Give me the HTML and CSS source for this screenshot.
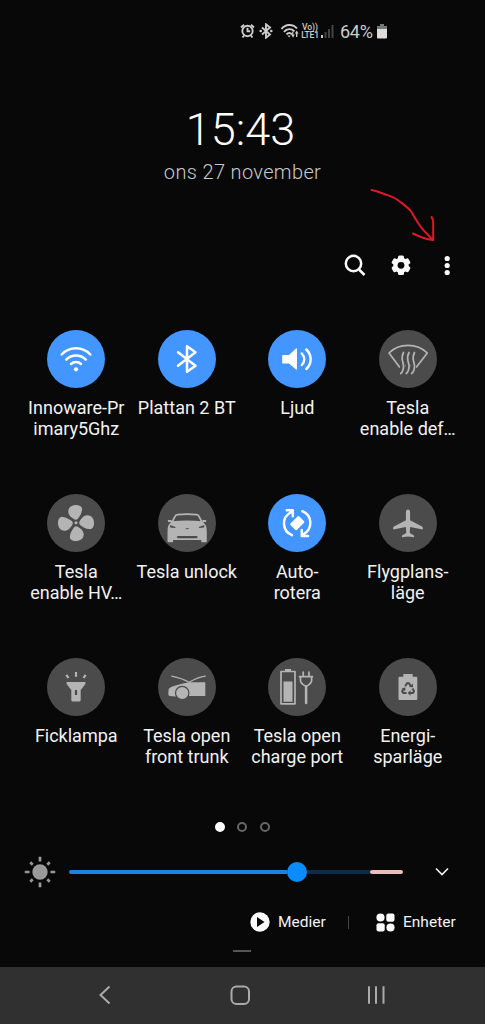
FILE: index.html
```
<!DOCTYPE html>
<html lang="sv">
<head>
<meta charset="utf-8">
<title>Snabbpanel</title>
<link rel="stylesheet" href="styles.css">
</head>
<body>
<div class="phone">
  <header class="status">
    <svg class="status-alarm" width="15" height="16" viewBox="0 0 15 16"><circle cx="7.500" cy="8" r="5.200" class="st-line"/><path class="st-line" d="M7.500 4.800v3.500h2.700M1 4.500L4 1.800M14 4.500L11 1.800M2.500 14.500l2-2.500M12.500 14.500l-2-2.500"/></svg>
    <svg class="status-bt" width="14" height="16" viewBox="0 0 14 16"><path class="st-line" d="M3 4.500l8 7-4 3.200V1.300l4 3.200-8 7"/><circle cx="1.700" cy="8" r="1.300" fill="#ccc"/><circle cx="12.300" cy="8" r="1.300" fill="#ccc"/></svg>
    <svg class="status-wifi" width="20" height="16" viewBox="0 0 20 16"><path class="st-line" d="M1.500 6C5.500 .8 13 .8 17 5.500M4 8.800c2.800-3.500 7.500-3.500 10.500-.5M6.500 11.300c1.500-1.800 4-1.800 5.500 0"/><path fill="#ccc" d="M7.500 12.500h3.200L9.200 14.500zM11.200 11.500h1v-3h1.200v3h1.300l-1.700 3.200zM14.800 10.500l1.900-3 1.900 3h-1.200v3.500h-1.400v-3.500z"/></svg>
    <div class="volte"><span>Vo))</span><span class="lte">LTE1</span></div>
    <svg class="status-signal" width="14" height="14" viewBox="0 0 14 14"><path fill="#ccc" d="M0 11h2v3H0z"/><path fill="#444" d="M3.500 8h2v6h-2zM7 5h2v9H7zM10.500 1h2v13h-2z"/></svg>
    <span class="percent">64%</span>
    <svg class="status-battery" width="10" height="15" viewBox="0 0 10 15"><path fill="#777" d="M3 0h4v2H3zM0 2h10v4H0z"/><path fill="#ddd" d="M0 5h10v8.500a1 1 0 0 1-1 1H1a1 1 0 0 1-1-1z"/></svg>
  </header>

  <section class="clock">
    <div class="time">15:43</div>
    <div class="date">ons 27 november</div>
  </section>

  <nav class="actions">
    <svg width="46" height="30" viewBox="0 0 46 30"><circle cx="21.500" cy="13.500" r="7.700" class="search-line"/><path class="search-line" d="M27 19.500l5.500 5.500"/></svg>
    <svg width="46" height="30" viewBox="0 0 46 30"><g fill="#fafafa"><circle cx="23" cy="15.300" r="7.700"/><g id="teeth"><rect x="20" y="5.600" width="6" height="19.400" rx="1.500"/></g><use href="#teeth" transform="rotate(60 23 15.300)"/><use href="#teeth" transform="rotate(120 23 15.300)"/></g><circle cx="23" cy="15.300" r="3.400" fill="#080808"/></svg>
    <svg width="46" height="30" viewBox="0 0 46 30"><g fill="#fafafa"><circle cx="23.200" cy="8.500" r="2.600"/><circle cx="23.200" cy="15.500" r="2.600"/><circle cx="23.200" cy="22.500" r="2.600"/></g></svg>
  </nav>

  <main class="tiles">
    <div class="tile">
      <svg class="disc on" viewBox="0 0 58 58"><g class="line"><path d="M14.700 24.500C22.500 16.300 35.500 16.300 43.300 24.500M19.300 29.500c5.500-5.500 13.900-5.500 19.400 0M24 34c2.800-2.600 7.200-2.600 10 0"/></g><circle class="fill" cx="29" cy="39.300" r="2.100"/></svg>
      <div class="label">Innoware-Pr<br>imary5Ghz</div>
    </div>
    <div class="tile">
      <svg class="disc on" viewBox="0 0 58 58"><path class="line" d="M20 22.300L37.500 35.700 29 41.700V16.300l8.500 6L20 35.700"/></svg>
      <div class="label">Plattan 2 BT</div>
    </div>
    <div class="tile">
      <svg class="disc on" viewBox="0 0 58 58"><path class="fill" d="M15 25h6l7-6.500q1-.8 1 .5v20q0 1.300-1 .5L21 33.500h-6q-.8 0-.8-.8v-7q0-.7.800-.7z"/><path class="line" d="M33.800 23.500c3.200 3.500 3.200 8 0 11.500M38.300 19.500c5.800 5.500 5.800 14 0 19.500"/></svg>
      <div class="label">Ljud</div>
    </div>
    <div class="tile">
      <svg class="disc" viewBox="0 0 58 58"><path class="line thin" d="M10 23C20 12.800 38 12.800 48.300 23L37.500 37q-8.500-3.500-17 0z"/><path class="line gap" d="M23.500 25v15M29 25v15M34.500 25v15"/><path class="line thin" d="M24.500 22.500q-2.200 4-1 8.500 1.800 5 .5 9-.7 2.300-2.300 3.500M30 22.500q-2.200 4-1 8.500 1.800 5 .5 9-.7 2.300-2.300 3.500M35.500 22.500q-2.200 4-1 8.500 1.800 5 .5 9-.7 2.300-2.300 3.500"/></svg>
      <div class="label">Tesla<br>enable def…</div>
    </div>

    <div class="tile">
      <svg class="disc" viewBox="0 0 58 58"><circle class="fill" cx="29" cy="28.700" r="1.500"/><g class="fill"><path id="blade" d="M27.300 25.300C24 23.500 21.300 21 21.300 17.500c0-4.500 4-6.700 8.500-6.500 3.500.2 5.700 2 5.300 4.800-.4 3.500-2.300 6.500-4.200 9-1.300 1.300-2.300 1.300-3.600.5z"/><use href="#blade" transform="rotate(90 29 29)"/><use href="#blade" transform="rotate(180 29 29)"/><use href="#blade" transform="rotate(270 29 29)"/></g></svg>
      <div class="label">Tesla<br>enable HV…</div>
    </div>
    <div class="tile">
      <svg class="disc" viewBox="0 0 58 58"><path class="line thin" d="M14 28l3.500-6.300q.5-1 2-1.100 9.500-.8 19 0 1.500.1 2 1.100L44 28"/><path class="fill" d="M13.500 27.300q15.500-1.500 31 0l3.300 4q1.200 2.500 1 7v9.300q0 .7-.8.700h-4q-.8 0-.8-.7V46H15.100v1.600q0 .7-.8.700h-4q-.8 0-.8-.7v-9.300q-.2-4.500 1-7zM9.800 26h3.700v2H10zM44.500 26h3.700l-.2 2h-3.500z"/><path fill="#4b4b4b" d="M12 31l5.500 2-.3 1-5-.6zM46.300 31l-5.500 2 .3 1 5-.6zM27 34.300h4.500l-2.200 1.200zM20 41.900h18.500l1.500 1.200-1.500 1.200H20l-1.500-1.200z"/></svg>
      <div class="label">Tesla unlock</div>
    </div>
    <div class="tile">
      <svg class="disc on" viewBox="0 0 58 58"><path class="line" d="M24 41.200C14 37 12.800 23.500 23.300 18M18.800 16.300h6v6M34.300 17.200c10 4.200 11 17.300 1 23.300M40 42h-6.200v-6"/><rect class="fill" x="24.800" y="23" width="9" height="12.300" rx="1" transform="rotate(45 29.300 29.100)"/></svg>
      <div class="label">Auto-<br>rotera</div>
    </div>
    <div class="tile">
      <svg class="disc" viewBox="0 0 58 58"><path class="fill" d="M26.900 18.500q0-3 2.100-3t2.100 3v7.800L43 32.500q.8.500.8 1.300v1.700L31.100 33l-.4 6 4 2.300q.4.300.4 1v1L29 42.500l-6.100.8v-1q0-.7.400-1l4-2.300-.4-6-12.700 2.500v-1.700q0-.8.800-1.300l11.900-6.200z"/></svg>
      <div class="label">Flygplans-<br>läge</div>
    </div>

    <div class="tile">
      <svg class="disc" viewBox="0 0 58 58"><path class="fill" fill-rule="evenodd" d="M19.500 24h19q.2 1.500-.3 2.200L33.700 32v10q0 1.500-1.500 1.500h-6.400q-1.500 0-1.500-1.500V32l-4.500-5.800q-.5-.7-.3-2.200zM27.900 32v5h2.200v-5z"/><path class="ray" d="M29 14v4.700M19.300 16.800l2.200 3.200M38.700 16.800L36.500 20"/></svg>
      <div class="label">Ficklampa</div>
    </div>
    <div class="tile">
      <svg class="disc" viewBox="0 0 58 58"><path class="line hair" d="M13.700 18.200C20 19.500 27 22 31 24.300 36 21.500 42 19 47.300 18.200"/><path class="fill" d="M31 24.300h16.300V38H30.500l-13 .5-6-.5q-1.500-.5-1.200-3l.4-4q1-1.700 6-3.300Q24 25.500 31 24.300z"/><circle cx="24.200" cy="35" r="6.700" fill="#b4b4b4" stroke="#4b4b4b" stroke-width="1.200"/></svg>
      <div class="label">Tesla open<br>front trunk</div>
    </div>
    <div class="tile">
      <svg class="disc" viewBox="0 0 58 58"><path class="line thin" d="M13 13.500h14v32.300H13z"/><path class="fill" d="M17 11h6v2.500h-6zM15.500 23.500h9v20.300h-9z"/><path class="line thin" d="M35.200 14v4M41 14v4M31.500 18.700h13M32.500 19v3.500q0 3 5.600 6 5.500-3 5.500-6V19"/><path class="line" d="M38.100 28.500V45"/></svg>
      <div class="label">Tesla open<br>charge port</div>
    </div>
    <div class="tile">
      <svg class="disc" viewBox="0 0 58 58"><path class="fill" d="M24.300 16h9.400v2.700h3.600q1 0 1 1V41q0 1-1 1H20.500q-1 0-1-1V19.700q0-1 1-1h3.800z"/><g fill="none" stroke="#4b4b4b" stroke-width="2"><path d="M26.200 28.300l1.800-3h2l2 3.300M33.500 30.500l1.500 2.700-1 1.800h-3M27.500 35h-3.300l-1-1.800 1.700-2.700"/></g><path fill="#4b4b4b" d="M30 29l4 .3v-3.800zM31.500 32.300v5.500l-2.800-2.800zM22.300 31l4-1.700v3.700z"/></svg>
      <div class="label">Energi-<br>sparläge</div>
    </div>
  </main>

  <div class="pages"><i class="page current"></i><i class="page"></i><i class="page"></i></div>

  <section class="brightness">
    <svg class="sun" viewBox="0 0 32 32"><circle cx="16" cy="16" r="7.700" fill="#999"/><path stroke="#999" stroke-width="2.700" d="M16 .8v4.700M16 26.500v4.700M.8 16h4.700M26.500 16h4.700M6.300 6.300l2.400 2.400M23.300 23.300l2.400 2.400M6.300 25.700l2.400-2.400M23.300 8.700l2.400-2.400"/></svg>
    <div class="track"><span class="filled"></span><span class="knob"></span><span class="rest"></span><span class="limit"></span></div>
    <svg class="chevron" width="14" height="10" viewBox="0 0 14 10"><path d="M1 1.500l6 6 6-6" fill="none" stroke="#eee" stroke-width="1.700"/></svg>
  </section>

  <section class="shortcuts">
    <svg class="play" width="20" height="20" viewBox="0 0 20 20"><circle cx="10" cy="10" r="9.700" fill="#fafafa"/><path fill="#080808" d="M7 5v10l7.500-5z"/></svg>
    <span>Medier</span>
    <i class="divider"></i>
    <svg class="devices" width="19" height="19" viewBox="0 0 19 19"><g fill="#fafafa"><circle cx="4.500" cy="4.500" r="4.100"/><rect x="10.300" y=".5" width="8.200" height="8.200" rx="2"/><rect x=".5" y="10.300" width="8.200" height="8.200" rx="2"/><circle cx="14.500" cy="14.500" r="4.100"/></g></svg>
    <span>Enheter</span>
  </section>

  <div class="handle"></div>

  <footer class="navbar">
    <svg width="136" height="24" viewBox="0 0 136 24"><path class="nav-line" d="M73.500 3.500l-9 8.500 9 8.500"/></svg>
    <svg width="136" height="24" viewBox="0 0 136 24"><rect class="nav-line" x="59.500" y="3.500" width="17.500" height="17.500" rx="5"/></svg>
    <svg width="136" height="24" viewBox="0 0 136 24"><path class="nav-line" d="M61 3.200v17.600M68 3.200v17.600M75.500 3.200v17.600"/></svg>
  </footer>

  <svg class="annotation" width="70" height="58" viewBox="368 186 70 58"><path d="M371.500 190c6 1 10 3 14 4.500 5 1.800 9 3 12.500 5.700 5 4 9.500 6.500 13.500 11.800 3 5 5 9 9 14.500 3 4.500 8 8 12 13.500M431.500 217q1.700 2 1.700 6v17M413 233.500q5 2.500 10 4.200 5 1.800 10 2.300"/></svg>
</div>
</body>
</html>
```
FILE: styles.css
```
* { box-sizing: border-box; }
body {
  margin: 0;
  background: #080808;
  color: #f2f2f2;
  font-family: Roboto, "Liberation Sans", sans-serif;
}
.phone {
  position: relative;
  display: flex;
  flex-direction: column;
  width: 485px;
  height: 1024px;
  overflow: hidden;
}
svg { display: block; flex: none; }

.status {
  display: flex;
  align-items: center;
  height: 62px;
  padding-left: 240px;
  color: #ccc;
}
.st-line { fill: none; stroke: #ccc; stroke-width: 1.9; }
.status-bt { margin-left: 4px; }
.status-wifi { margin-left: 7px; }
.volte {
  display: flex;
  flex-direction: column;
  align-items: center;
  width: 20px;
  font-size: 8.5px;
  font-weight: 500;
  line-height: 8px;
}
.lte { letter-spacing: -0.2px; }
.status-signal { margin-left: 1px; }
.percent { width: 34px; margin-left: 5px; font-size: 18px; letter-spacing: -0.3px; white-space: nowrap; }
.status-battery { margin-left: 3px; }

.clock {
  height: 183px;
  padding-top: 41px;
  text-align: center;
  font-weight: 300;
}
.time { font-size: 45px; line-height: 53px; color: #fff; padding-right: 4px; }
.date { margin-top: 4px; font-size: 20px; letter-spacing: 0.35px; line-height: 24px; color: #c8c8c8; }

.actions { display: flex; height: 40px; margin-bottom: 45px; padding: 5px 0 0 332px; }
.search-line { fill: none; stroke: #fafafa; stroke-width: 2.5; }

.tiles {
  display: grid;
  grid-template-columns: repeat(4, 110.5px);
  grid-auto-rows: 164px;
  padding-left: 21px;
  height: 492px;
}
.tile { display: flex; flex-direction: column; align-items: center; }
.disc { width: 58px; height: 58px; border-radius: 50%; background: #4b4b4b; }
.disc.on { background: #4395ff; }
.fill { fill: #b4b4b4; }
.line { fill: none; stroke: #b4b4b4; stroke-width: 2.5; stroke-linecap: round; stroke-linejoin: round; }
.line.thin { stroke-width: 1.7; }
.line.hair { stroke-width: 1.2; }
.line.gap { stroke: #4b4b4b; stroke-width: 5; }
.on .fill { fill: #fff; }
.on .line { stroke: #fff; }
.ray { stroke: #b4b4b4; stroke-width: 2.2; }
.label {
  margin-top: 9px;
  font-size: 18px;
  line-height: 21px;
  text-align: center;
  white-space: nowrap;
}

.pages { display: flex; gap: 12.3px; height: 10px; padding-left: 215px; }
.page { width: 10px; height: 10px; border: 2px solid #666; border-radius: 50%; }
.page.current { border-color: #fff; background: #fff; }

.brightness { display: flex; align-items: center; height: 80px; padding-left: 24px; }
.sun { width: 32px; height: 32px; }
.track { display: flex; align-items: center; width: 334px; margin-left: 13px; }
.filled { width: 218px; height: 4px; background: #1a82e2; border-radius: 2px 0 0 2px; }
.knob { width: 20px; height: 20px; background: #0a8cff; border-radius: 50%; }
.rest { width: 63px; height: 4px; background: #0b2b4b; }
.limit { width: 33px; height: 4px; background: #ebbcbc; border-radius: 2px; }
.chevron { margin-left: 32px; }

.shortcuts { display: flex; align-items: center; height: 20px; padding-left: 250px; font-size: 15.5px; }
.shortcuts span { line-height: 20px; width: 48px; margin-left: 8px; white-space: nowrap; }
.divider { width: 1px; height: 13px; margin-left: 22px; background: #444; }
.devices { margin-left: 27px; }

.handle { width: 18px; height: 2px; margin: 18px 0 15px 233px; background: #555; }
.navbar {
  display: flex;
  align-items: center;
  flex: 1;
  padding: 0 36px 2px;
  background: #303030;
}
.nav-line { fill: none; stroke: #aaa; stroke-width: 2; }
.annotation { position: absolute; left: 368px; top: 186px; }
.annotation path { fill: none; stroke: #df1825; stroke-width: 2; stroke-linecap: round; stroke-linejoin: round; }
```
